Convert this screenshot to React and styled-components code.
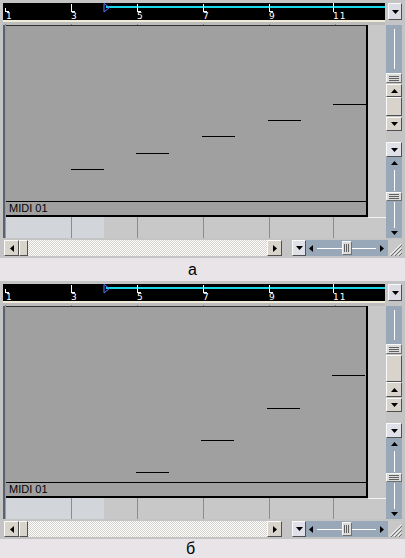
import React from 'react';
import styled, { createGlobalStyle } from 'styled-components';

const Global = createGlobalStyle`
  html, body { margin: 0; padding: 0; background: #e8e4e8; }
  body { font-family: "Liberation Sans", Arial, sans-serif; }
`;

const Page = styled.div`
  width: 405px;
  display: flex;
  flex-direction: column;
`;

const Panel = styled.div`
  width: 405px;
  height: 258px;
  box-sizing: border-box;
  background: #c4c4c4;
  padding: 3px 3px 2px 3px;
  display: flex;
  flex-direction: column;
`;

const TopRow = styled.div`
  display: flex;
  gap: 3px;
  height: 17px;
`;

const Ruler = styled.div`
  position: relative;
  width: 382px;
  height: 17px;
  background: #000;
  overflow: hidden;
`;

const Loop = styled.div`
  position: absolute;
  left: 103px;
  right: 0;
  top: 3px;
  height: 2px;
  background: #18d8e8;
`;

const Locator = styled.svg`
  position: absolute;
  left: 100px;
  top: 0;
`;

const Mark = styled.div`
  position: absolute;
  top: 0;
  height: 17px;
`;

const MarkStem = styled.div`
  position: absolute;
  left: 0;
  top: ${p => p.$top}px;
  width: 1px;
  height: ${p => 9 - p.$top}px;
  background: #fff;
`;

const MarkFoot = styled.div`
  position: absolute;
  left: 0;
  top: 8px;
  width: 4px;
  height: 1px;
  background: #fff;
`;

const MarkNum = styled.span`
  position: absolute;
  left: 0;
  top: 9px;
  font-family: "DejaVu Sans", "Liberation Sans", sans-serif;
  font-size: 9px;
  line-height: 9px;
  color: #fff;
  letter-spacing: 1px;
  white-space: nowrap;
`;

const BevelBtn = styled.div`
  box-sizing: border-box;
  width: ${p => p.$w ? `${p.$w}px` : 'auto'};
  height: ${p => p.$h ? `${p.$h}px` : 'auto'};
  flex: none;
  background: ${p => p.$bg || '#d8d4cc'};
  border-top: 1px solid #fafafa;
  border-left: 1px solid #fafafa;
  border-right: 1px solid #505050;
  border-bottom: 1px solid #505050;
  display: flex;
  align-items: center;
  justify-content: center;
`;

const UnderStrip = styled.div`
  height: 5px;
  box-sizing: border-box;
  border-top: 2px solid #f0ecd8;
  background-color: #bcbcbc;
  background-image: repeating-linear-gradient(90deg, #808080 0 1px, transparent 1px 66px);
  background-size: 100% 1px;
  background-position: 2px 100%;
  background-repeat: no-repeat;
  margin-right: 17px;
`;

const Body = styled.div`
  display: flex;
  height: 213px;
`;

const LeftEdge = styled.div`
  width: 3px;
  flex: none;
  background: linear-gradient(90deg, #5a6270 0 2px, #9a9a9a 2px 3px);
`;

const Main = styled.div`
  width: 362px;
  flex: none;
  display: flex;
  flex-direction: column;
`;

const Grid = styled.div`
  height: 192px;
  box-sizing: border-box;
  background: #a0a0a0;
  border-right: 2px solid #000;
  border-bottom: 2px solid #000;
  display: flex;
  flex-direction: column;
`;

const NoteArea = styled.div`
  position: relative;
  flex: 1;
  border-top: 1px solid #303030;
`;

const Note = styled.div`
  position: absolute;
  height: 1px;
  width: 33px;
  background: #000;
`;

const Label = styled.div`
  height: 14px;
  box-sizing: border-box;
  border-top: 1px solid #000;
  padding-left: 3px;
  font-size: 11px;
  line-height: 13px;
  color: #000;
`;

const Cells = styled.div`
  display: flex;
  height: 21px;
`;

const Cell = styled.div`
  box-sizing: border-box;
  width: ${p => p.$w ? `${p.$w}px` : 'auto'};
  flex: ${p => p.$w ? 'none' : '1'};
  background: ${p => p.$tint ? '#d2d6da' : '#c8c8c8'};
  border-left: ${p => p.$div ? '1px solid #8c8c8c' : 'none'};
`;

const GapCol = styled.div`
  width: 18px;
  flex: none;
  background: #c8c8c8;
  display: flex;
  flex-direction: column;
`;

const GapLine = styled.div`
  margin-top: 192px;
  height: 1px;
  background: #f4f4f4;
`;

const VScroll = styled.div`
  width: 16px;
  flex: none;
  display: flex;
  flex-direction: column;
`;

const Track = styled.div`
  height: ${p => p.$h}px;
  flex: none;
  background: #98a8b8;
  display: flex;
  flex-direction: ${p => p.$row ? 'row' : 'column'};
  align-items: center;
  box-sizing: border-box;
  padding: ${p => p.$pad || '0'};
`;

const VLine = styled.div`
  width: 1px;
  background: #fff;
  flex: ${p => p.$flex || 'none'};
  margin: ${p => p.$m || '0'};
`;

const HLine = styled.div`
  height: 1px;
  background: #fff;
  flex: 1;
  margin: ${p => p.$m || '0'};
`;

const GripV = styled.div`
  height: ${p => p.$h}px;
  width: 16px;
  box-sizing: border-box;
  flex: none;
  background: #dcdcdc;
  border: 1px solid #f8f8f8;
  border-right-color: #707070;
  border-bottom-color: #707070;
  display: flex;
  flex-direction: column;
  justify-content: center;
  gap: 1px;
  padding: 0 2px;
`;

const GripBar = styled.div`
  height: 1px;
  background: #606060;
`;

const GripH = styled.div`
  width: ${p => p.$w}px;
  height: 14px;
  flex: none;
  box-sizing: border-box;
  background: #dcdcdc;
  border: 1px solid #f8f8f8;
  border-right-color: #707070;
  border-bottom-color: #707070;
  display: flex;
  justify-content: center;
  gap: 1px;
  padding: 2px 0;
`;

const GripBarV = styled.div`
  width: 1px;
  background: #606060;
`;

const Spacer = styled.div`
  height: ${p => p.$h || 0}px;
  width: ${p => p.$w || 0}px;
  flex: none;
  background: ${p => p.$bg || 'transparent'};
`;

const BottomRow = styled.div`
  display: flex;
  height: 16px;
  margin-top: 2px;
  padding-left: 1px;
`;

const Dither = styled.div`
  width: 239px;
  flex: none;
  background-color: #ffffff;
  background-image: repeating-conic-gradient(#d4d0cc 0 25%, #ffffff 0 50%);
  background-size: 2px 2px;
`;

const Resize = styled.div`
  width: 14px;
  flex: none;
  background: #c8c8c8;
  display: flex;
  align-items: flex-end;
  justify-content: flex-end;
`;

const Caption = styled.div`
  height: ${p => p.$h}px;
  padding-left: ${p => p.$x}px;
  font-family: "Liberation Sans", "DejaVu Sans", sans-serif;
  font-size: 16px;
  line-height: ${p => p.$lh}px;
  color: #000;
`;

const Tri = ({ dir, size = 7 }) => {
  const s = size;
  const h = Math.ceil(s / 2);
  let w, ht, pts;
  if (dir === 'down') { w = s; ht = h; pts = `0,0 ${s},0 ${s / 2},${h}`; }
  else if (dir === 'up') { w = s; ht = h; pts = `0,${h} ${s},${h} ${s / 2},0`; }
  else if (dir === 'left') { w = h; ht = s; pts = `${h},0 ${h},${s} 0,${s / 2}`; }
  else { w = h; ht = s; pts = `0,0 0,${s} ${h},${s / 2}`; }
  return (
    <svg width={w} height={ht} viewBox={`0 0 ${w} ${ht}`} style={{ display: 'block', flex: 'none' }}>
      <polygon points={pts} fill="#000" />
    </svg>
  );
};

const marks = [
  { x: 2, n: '1', top: 5 },
  { x: 68, n: '3', top: 1 },
  { x: 134, n: '5', top: 1 },
  { x: 200, n: '7', top: 1 },
  { x: 266, n: '9', top: 1 },
  { x: 330, n: '11', top: 0 },
];

const RulerBar = () => (
  <Ruler>
    <Loop />
    <Locator width="8" height="10" viewBox="0 0 8 10">
      <polygon points="1,0.5 6.5,4.5 1,9" fill="none" stroke="#5a78ff" strokeWidth="1" />
    </Locator>
    {marks.map(m => (
      <Mark key={m.n} style={{ left: m.x }}>
        <MarkStem $top={m.top} />
        {m.n !== '11' && <MarkFoot />}
        <MarkNum style={{ left: m.n === '1' ? 1 : 0 }}>{m.n}</MarkNum>
      </Mark>
    ))}
  </Ruler>
);

const SideScroll = ({ t1, g, up, thumb, down, lav, drop, t2, thumbFirst }) => {
  const upBtn = <BevelBtn $h={up}><Tri dir="up" /></BevelBtn>;
  const thumbBox = <BevelBtn $h={thumb} />;
  return (
    <VScroll>
      <Track $h={t1} $pad="4px 0 4px">
        <VLine $flex="1" />
      </Track>
      <GripV $h={g}><GripBar /><GripBar /><GripBar /></GripV>
      <Spacer $h={1} $bg="#c8c8c8" />
      {thumbFirst ? thumbBox : upBtn}
      {thumbFirst ? upBtn : thumbBox}
      <Spacer $h={1} $bg="#c8c8c8" />
      <BevelBtn $h={down}><Tri dir="down" /></BevelBtn>
      <Spacer $h={lav} $bg="#e4e4f0" />
      <BevelBtn $h={drop} $bg="#e0e0e8"><Tri dir="down" /></BevelBtn>
      <Track $h={t2} $pad="4px 0 3px">
        <Tri dir="up" />
        <VLine $flex="1" $m="5px 0 1px" />
        <GripV $h={9}><GripBar /><GripBar /><GripBar /></GripV>
        <VLine $flex="1.2" $m="1px 0 3px" />
        <Tri dir="down" />
      </Track>
    </VScroll>
  );
};

const MidiPanel = ({ notes, vs }) => (
  <Panel>
    <TopRow>
      <RulerBar />
      <BevelBtn $w={14} $bg="#dcdce4"><Tri dir="down" /></BevelBtn>
    </TopRow>
    <UnderStrip />
    <Body>
      <LeftEdge />
      <Main>
        <Grid>
          <NoteArea>
            {notes.map((n, i) => (
              <Note key={i} style={{ left: n[0], top: n[1] }} />
            ))}
          </NoteArea>
          <Label>MIDI 01</Label>
        </Grid>
        <Cells>
          <Cell $w={65} $tint />
          <Cell $w={33} $tint $div />
          <Cell $w={33} />
          <Cell $w={66} $div />
          <Cell $w={66} $div />
          <Cell $w={64} $div />
          <Cell $div />
        </Cells>
      </Main>
      <GapCol><GapLine /></GapCol>
      <SideScroll {...vs} />
    </Body>
    <BottomRow>
      <BevelBtn $w={15}><Tri dir="left" /></BevelBtn>
      <BevelBtn $w={9} />
      <Dither />
      <BevelBtn $w={15}><Tri dir="right" /></BevelBtn>
      <Spacer $w={10} $bg="#e4e4f0" />
      <BevelBtn $w={14} $bg="#e0e0e8"><Tri dir="down" /></BevelBtn>
      <Track $h={16} $row $pad="0 4px 0 3px" style={{ width: 82 }}>
        <Tri dir="left" />
        <HLine $m="0 0 0 4px" />
        <GripH $w={10}><GripBarV /><GripBarV /><GripBarV /></GripH>
        <HLine $m="0 4px 0 0" />
        <Tri dir="right" />
      </Track>
      <Resize>
        <svg width="14" height="14" viewBox="0 0 14 14" style={{ display: 'block' }}>
          <g stroke="#f4f4f4" strokeWidth="1">
            <line x1="13" y1="2" x2="2" y2="13" />
            <line x1="13" y1="6" x2="6" y2="13" />
            <line x1="13" y1="10" x2="10" y2="13" />
          </g>
          <g stroke="#707070" strokeWidth="1">
            <line x1="14" y1="3" x2="3" y2="14" />
            <line x1="14" y1="7" x2="7" y2="14" />
            <line x1="14" y1="11" x2="11" y2="14" />
          </g>
        </svg>
      </Resize>
    </BottomRow>
  </Panel>
);

const notesA = [[65, 143], [130, 127], [196, 110], [262, 94], [327, 78]];
const notesB = [[130, 165], [195, 133], [261, 101], [326, 68]];

const vsA = { t1: 48, g: 10, up: 13, thumb: 19, down: 14, lav: 11, drop: 15, t2: 81 };
const vsB = { t1: 38, g: 10, up: 15, thumb: 27, down: 14, lav: 11, drop: 15, t2: 81, thumbFirst: true };

export default function App() {
  return (
    <Page>
      <Global />
      <MidiPanel notes={notesA} vs={vsA} />
      <Caption $h={23} $x={188} $lh={24}>а</Caption>
      <MidiPanel notes={notesB} vs={vsB} />
      <Caption $h={19} $x={186} $lh={20}>б</Caption>
    </Page>
  );
}
